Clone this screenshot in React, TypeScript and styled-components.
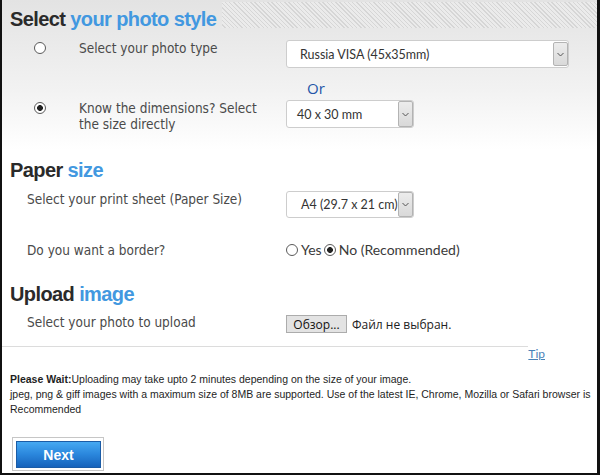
import * as React from "react";
import styled, { createGlobalStyle } from "styled-components";

const GlobalStyle = createGlobalStyle`
  html, body {
    margin: 0;
    padding: 0;
    background: #fff;
  }
  body {
    width: 600px;
    height: 475px;
    overflow: hidden;
  }
`;

const Frame = styled.div`
  box-sizing: border-box;
  width: 600px;
  height: 475px;
  border-left: 2px solid #111;
  border-right: 3px solid #111;
  border-bottom: 2px solid #111;
  background: linear-gradient(to bottom, #e3e3e3 0px, #f2f2f2 90px, #fff 150px);
  display: flex;
  flex-direction: column;
  font-family: "DejaVu Sans Condensed", Tahoma, sans-serif;
  color: #4a4a4a;
  overflow: hidden;
`;

const HeadingBar = styled.div<{ $top: number; $h: number }>`
  display: flex;
  align-items: stretch;
  height: ${(p) => p.$h}px;
  margin-top: ${(p) => p.$top}px;
`;

const Title = styled.h2<{ $pad: number }>`
  margin: 0;
  padding: ${(p) => p.$pad}px 6px 0 8px;
  font: bold 20px/24px "Liberation Sans", Arial, sans-serif;
  letter-spacing: -0.6px;
  color: #2a2a2a;
  white-space: nowrap;

  span {
    color: #4298e0;
  }
`;

const Hatch = styled.div`
  flex: 1;
  margin: 2px 0 2px;
  background: repeating-linear-gradient(
    45deg,
    #ebebeb 0px,
    #ebebeb 2px,
    #d6d6d6 2px,
    #d6d6d6 3px
  );
`;

const Row = styled.div<{ $top: number }>`
  display: grid;
  grid-template-columns: 284px auto;
  align-items: start;
  margin-top: ${(p) => p.$top}px;
`;

const LeftCell = styled.div<{ $indent: number }>`
  display: flex;
  align-items: flex-start;
  padding-left: ${(p) => p.$indent}px;
`;

const Label = styled.div<{ $gap?: number; $max?: number }>`
  margin-left: ${(p) => p.$gap || 0}px;
  max-width: ${(p) => (p.$max ? `${p.$max}px` : "none")};
  font-size: 13.5px;
  line-height: 16px;
  color: #4a4a4a;
`;

const RadioDot = styled.span<{ $on?: boolean; $top?: number }>`
  box-sizing: border-box;
  flex: none;
  display: inline-block;
  width: 12px;
  height: 12px;
  margin-top: ${(p) => p.$top || 0}px;
  border-radius: 50%;
  border: 1px solid #5a5a5a;
  background: ${(p) =>
    p.$on
      ? "radial-gradient(circle, #222 0 2.6px, #fff 3.2px)"
      : "#fff"};
`;

const Select = styled.div<{ $w: number; $h: number }>`
  box-sizing: border-box;
  width: ${(p) => p.$w}px;
  height: ${(p) => p.$h}px;
  display: flex;
  align-items: stretch;
  background: #fff;
  border: 1px solid #cdcdcd;
  border-radius: 3px;
  font: 12.5px "Lato", "Open Sans", sans-serif;
  color: #333;
`;

const SelectValue = styled.span<{ $pad: number }>`
  flex: 1;
  min-width: 0;
  display: flex;
  align-items: center;
  padding-left: ${(p) => p.$pad}px;
  overflow: hidden;
  white-space: nowrap;
`;

const ArrowBox = styled.span<{ $inset: number }>`
  box-sizing: border-box;
  flex: none;
  width: 15px;
  margin: ${(p) => p.$inset}px 0;
  display: flex;
  align-items: center;
  justify-content: center;
  background: linear-gradient(to bottom, #ececec, #d9d9d9);
  border: 1px solid #b3b3b3;
  border-radius: 2px;
`;

const Chevron: React.FunctionComponent = () => (
  <svg width="7" height="5" viewBox="0 0 7 5">
    <polyline points="0.5,1 3.5,4 6.5,1" fill="none" stroke="#555" strokeWidth="1" />
  </svg>
);

const Or = styled.div`
  margin: 12px 0 0 305px;
  font: 15px/16px "Open Sans", Arial, sans-serif;
  color: #2456a8;
`;

const RadioGroup = styled.div`
  display: flex;
  align-items: center;
  height: 16px;
  font: 14px/16px "Lato", "Open Sans", sans-serif;
  color: #3a3a3a;
`;

const RadioText = styled.span`
  margin: 0 2px 0 3px;
`;

const FileLine = styled.div`
  display: flex;
  align-items: center;
  margin-top: 1px;
  font: 12px "Open Sans", sans-serif;
  color: #222;
`;

const FileButton = styled.span`
  box-sizing: border-box;
  width: 61px;
  height: 18px;
  display: flex;
  align-items: center;
  justify-content: center;
  background: #e3e3e3;
  border: 1px solid #acacac;
  color: #111;
`;

const FileName = styled.span`
  margin-left: 5px;
`;

const Rule = styled.div`
  width: 526px;
  height: 1px;
  margin-top: 13px;
  background: #dcdcdc;
`;

const TipLine = styled.div`
  width: 543px;
  text-align: right;
  font: 12px/14px "Lato", sans-serif;
`;

const TipLink = styled.a`
  color: #4a82b8;
  text-decoration: underline;
`;

const Note = styled.div`
  margin-top: 11px;
  padding: 0 4px 0 8px;
  font: 10.5px/15px "Liberation Sans", Tahoma, sans-serif;
  color: #1e1e1e;

  b {
    font-weight: bold;
  }
`;

const ButtonWrap = styled.div`
  margin: 20px 0 0 10px;
  box-sizing: border-box;
  width: 92px;
  height: 34px;
  padding: 3px 2px 2px 3px;
  border: 1px solid #c6c6c6;
  background: #fff;
`;

const NextButton = styled.button`
  box-sizing: border-box;
  width: 100%;
  height: 100%;
  padding: 0;
  border: 1px solid #1b5ca6;
  background: linear-gradient(to bottom, #46a9f2 0%, #2a86dc 50%, #1763bb 100%);
  color: #fff;
  font: bold 14px "Liberation Sans", Arial, sans-serif;
  cursor: pointer;
`;

const SelectBox: React.FunctionComponent<{
  value: string;
  w: number;
  h: number;
  pad: number;
  inset: number;
}> = ({ value, w, h, pad, inset }) => (
  <Select $w={w} $h={h}>
    <SelectValue $pad={pad}>{value}</SelectValue>
    <ArrowBox $inset={inset}>
      <Chevron />
    </ArrowBox>
  </Select>
);

const App: React.FunctionComponent = () => {
  return (
    <>
      <GlobalStyle />
      <Frame>
        <HeadingBar $top={0} $h={30}>
          <Title $pad={7}>
            Select <span>your photo style</span>
          </Title>
          <Hatch />
        </HeadingBar>

        <Row $top={10}>
          <LeftCell $indent={32}>
            <RadioDot $top={2} />
            <Label $gap={33}>Select your photo type</Label>
          </LeftCell>
          <SelectBox value="Russia VISA (45x35mm)" w={283} h={28} pad={13} inset={1} />
        </Row>

        <Or>Or</Or>

        <Row $top={4}>
          <LeftCell $indent={32}>
            <RadioDot $top={2} $on />
            <Label $gap={33} $max={180}>
              Know the dimensions? Select the size directly
            </Label>
          </LeftCell>
          <SelectBox value="40 x 30 mm" w={128} h={28} pad={10} inset={0} />
        </Row>

        <HeadingBar $top={26} $h={24}>
          <Title $pad={0}>
            Paper <span>size</span>
          </Title>
        </HeadingBar>

        <Row $top={9}>
          <LeftCell $indent={25}>
            <Label>Select your print sheet (Paper Size)</Label>
          </LeftCell>
          <SelectBox value="A4 (29.7 x 21 cm)" w={128} h={27} pad={14} inset={0} />
        </Row>

        <Row $top={24}>
          <LeftCell $indent={25}>
            <Label>Do you want a border?</Label>
          </LeftCell>
          <RadioGroup>
            <RadioDot />
            <RadioText>Yes</RadioText>
            <RadioDot $on />
            <RadioText>No (Recommended)</RadioText>
          </RadioGroup>
        </Row>

        <HeadingBar $top={24} $h={24}>
          <Title $pad={0}>
            Upload <span>image</span>
          </Title>
        </HeadingBar>

        <Row $top={8}>
          <LeftCell $indent={25}>
            <Label>Select your photo to upload</Label>
          </LeftCell>
          <FileLine>
            <FileButton>Обзор...</FileButton>
            <FileName>Файл не выбран.</FileName>
          </FileLine>
        </Row>

        <Rule />
        <TipLine>
          <TipLink href="#">Tip</TipLink>
        </TipLine>

        <Note>
          <b>Please Wait:</b>Uploading may take upto 2 minutes depending on the
          size of your image.
          <br />
          jpeg, png &amp; giff images with a maximum size of 8MB are supported.
          Use of the latest IE, Chrome, Mozilla or Safari browser is Recommended
        </Note>

        <ButtonWrap>
          <NextButton>Next</NextButton>
        </ButtonWrap>
      </Frame>
    </>
  );
};

export default App;
